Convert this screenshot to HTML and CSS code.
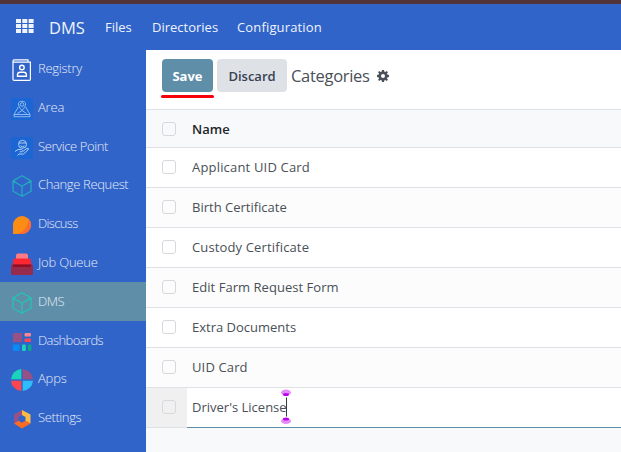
FILE: index.html
```html
<!DOCTYPE html>
<html lang="en">
<head>
<meta charset="utf-8">
<title>Categories</title>
<link rel="stylesheet" href="styles.css">
</head>
<body>
<header class="navbar">
  <svg class="grid-icon" width="18" height="14" viewBox="0 0 18 14" fill="#eef3fc"><path d="M0 0h5v4H0zM6.3 0h5v4h-5zM12.6 0h5v4h-5zM0 5h5v4H0zM6.3 5h5v4h-5zM12.6 5h5v4h-5zM0 10h5v4H0zM6.3 10h5v4h-5zM12.6 10h5v4h-5z"/></svg>
  <span class="brand">DMS</span>
  <nav class="menu"><a class="m1">Files</a><a class="m2">Directories</a><a class="m3">Configuration</a></nav>
</header>
<div class="body">
  <aside class="sidebar">
    <a class="app"><svg width="22" height="22" viewBox="0 0 22 22" fill="none" stroke="#fff" stroke-width="1.2"><path d="M17 3V.8H3.200Q2 .8 2 2T3.200 3.200H19.400V20.200Q19.400 21.300 18.300 21.300H3.200Q2 21.300 2 20.200V2"/><circle cx="10.900" cy="8.500" r="2.300" stroke-width="1.400"/><path stroke-width="1.400" d="M6.500 17.200V15.500Q6.700 13.200 9 13.200H12.800Q15.200 13.200 15.400 15.500V17.200Z"/></svg><span class="s1">Registry</span></a>
    <a class="app"><svg width="22" height="22" viewBox="0 0 22 22" fill="none" stroke="#9cc2f2" stroke-width=".9"><path fill="#1b66d2" stroke="none" d="M0 0h22v22H0z"/><path d="M11 12.500C5.500 6.500 7 3.300 11 3.300S16.500 6.500 11 12.500ZM7.300 9 3 16.500H19L14.700 9M3 16.500V18.700H19V16.500M6.500 15.500 11 12.500 15.500 15.500"/><circle cx="11" cy="6.500" r="1.800"/></svg><span class="s2">Area</span></a>
    <a class="app"><svg width="22" height="22" viewBox="0 0 22 22" fill="none" stroke="#c0d8f7" stroke-width=".9"><path fill="#1b66d2" stroke="none" d="M0 0h22v22H0z"/><circle cx="11.500" cy="7.300" r="4"/><path d="M7.800 6H15.200M9.500 8.800Q11.500 10.800 13.500 8.800M4 14.500 7 12.500H10.500Q12.500 13.500 10.500 14.800H8.500M11.500 14.800 16 11.300Q18.300 11 17 13L12.500 17H8L6.500 18.500"/></svg><span class="s3">Service Point</span></a>
    <a class="app"><svg width="22" height="22" viewBox="0 0 22 22" fill="none" stroke="#24aabf" stroke-width="1.300" stroke-linejoin="round"><path d="M11 .8 20 5.900V16.200L11 21.300 2 16.200V5.900ZM2 5.900 11 11.300 20 5.900M11 11.300V21.300"/></svg><span class="s4">Change Request</span></a>
    <a class="app"><svg width="22" height="22" viewBox="0 0 22 22"><path fill="#fc8d14" d="M2 20V11A9 9 0 1 1 11 20Z"/><path fill="#fc6b30" d="M18 5.300A9 9 0 0 1 11 20H6.500Q16 17.500 18 5.300Z"/></svg><span class="s5">Discuss</span></a>
    <a class="app"><svg width="22" height="22" viewBox="0 0 22 22"><rect x="5" y=".5" width="12" height="7" rx="2" fill="#fb7c85"/><rect x="2" y="5.500" width="18" height="9" rx="2" fill="#fb2632"/><rect y="11.500" width="22" height="10.500" rx="1.500" fill="#962b4c"/><path fill="#970c20" d="M2 11.500H20V13Q20 14 18.500 14H3.500Q2 14 2 13Z"/></svg><span class="s6">Job Queue</span></a>
    <a class="app active"><svg width="22" height="22" viewBox="0 0 22 22" fill="none" stroke="#27c2b4" stroke-width="1.300" stroke-linejoin="round"><path d="M11 .8 20 5.900V16.200L11 21.300 2 16.200V5.900ZM2 5.900 11 11.300 20 5.900M11 11.300V21.300"/></svg><span class="s7">DMS</span></a>
    <a class="app"><svg width="22" height="22" viewBox="0 0 22 22"><rect x="2" y="2" width="9" height="9" rx=".8" fill="#985184"/><rect x="13.500" y="2" width="6.500" height="3.500" rx="1" fill="#fc868b"/><rect x="13.500" y="7.500" width="6.500" height="3.500" rx="1" fill="#fb4650"/><rect x="2" y="13.500" width="6.500" height="6.500" rx="1" fill="#088bf5"/><rect x="11" y="13.500" width="3.800" height="6.500" rx="1" fill="#1ad3bb"/><rect x="17" y="13.500" width="3.300" height="6.500" rx="1" fill="#05ae88"/></svg><span class="s8">Dashboards</span></a>
    <a class="app"><svg width="22" height="22" viewBox="0 0 22 22"><path fill="#1ad3bb" d="M10.300 0V10.300H0A11 11 0 0 1 10.300 0Z"/><path fill="#985184" d="M11.700 0V10.300H22A11 11 0 0 0 11.700 0Z"/><path fill="#fb4650" d="M10.300 22V11.700H0A11 11 0 0 0 10.300 22Z"/><path fill="#2ebcfa" d="M11.700 22V11.700H22A11 11 0 0 1 11.700 22Z"/></svg><span class="s9">Apps</span></a>
    <a class="app"><svg width="22" height="22" viewBox="0 0 22 22"><path fill="#985184" d="M11 2 3 6.500V15.500L7.500 13V9L11 7Z"/><path fill="#fbb945" d="M11 2 19.500 6.500V15.500L14.500 13V9L11 7Z"/><path fill="#fc6b23" d="M3 15.500 7.500 12.800 11 14.800 14.500 12.800 19.500 15.500 11 20.500Z"/></svg><span class="s10">Settings</span></a>
  </aside>
  <main class="content">
    <div class="control">
      <div class="save-wrap"><button class="btn save">Save</button><i class="underline"></i></div>
      <button class="btn discard">Discard</button>
      <h1>Categories</h1>
      <svg class="gear" width="12" height="12" viewBox="0 0 12 12" fill="#495057"><path fill-rule="evenodd" d="M5 0H7L7.400 1.700 8.300 2.100 9.800 1.100 10.900 2.200 9.900 3.700 10.300 4.600 12 5V7L10.300 7.400 9.900 8.300 10.900 9.800 9.800 10.900 8.300 9.900 7.400 10.300 7 12H5L4.600 10.300 3.700 9.900 2.200 10.900 1.100 9.800 2.100 8.300 1.700 7.400 0 7V5L1.700 4.600 2.100 3.700 1.100 2.200 2.200 1.100 3.700 2.100 4.600 1.700ZM6 4A2 2 0 1 0 6 8A2 2 0 1 0 6 4Z"/></svg>
    </div>
    <div class="row head"><span class="check"><i></i></span><span class="cell"><span class="t0">Name</span></span></div>
    <div class="row"><span class="check"><i></i></span><span class="cell"><span class="t1">Applicant UID Card</span></span></div>
    <div class="row alt"><span class="check"><i></i></span><span class="cell"><span class="t2">Birth Certificate</span></span></div>
    <div class="row"><span class="check"><i></i></span><span class="cell"><span class="t3">Custody Certificate</span></span></div>
    <div class="row alt"><span class="check"><i></i></span><span class="cell"><span class="t4">Edit Farm Request Form</span></span></div>
    <div class="row"><span class="check"><i></i></span><span class="cell"><span class="t5">Extra Documents</span></span></div>
    <div class="row alt"><span class="check"><i></i></span><span class="cell"><span class="t6">UID Card</span></span></div>
    <div class="row editing"><span class="check"><i></i></span><span class="cell"><span class="t7">Driver's License</span>
      <svg class="caret" width="10" height="36" viewBox="0 0 10 36"><ellipse cx="5" cy="3.500" rx="5" ry="3" fill="#e38bf8"/><ellipse cx="5" cy="5.500" rx="3" ry="1.500" fill="#be00f0"/><path fill="#343a40" d="M5 8.500h1v19H5z"/><ellipse cx="5" cy="32" rx="5" ry="3" fill="#e38bf8"/><ellipse cx="5" cy="30" rx="3" ry="1.500" fill="#be00f0"/></svg></span></div>
  </main>
</div>
</body>
</html>
```
FILE: styles.css
```css
* { box-sizing: border-box; }
body { margin: 0; width: 621px; height: 452px; overflow: hidden; background: #3164c9; font-family: "Open Sans", "Noto Sans", sans-serif; font-size: 13px; color: #495057; }
.navbar { height: 50px; border-top: 4px solid #523439; display: flex; align-items: center; padding-left: 16px; color: #eef3fc; }
.grid-icon { margin-bottom: 2px; }
.brand { font-size: 16.500px; width: 56px; margin-left: 15px; white-space: nowrap; }
.menu { display: flex; }
.menu a { white-space: nowrap; }
.m1 { width: 47px; }
.m2 { width: 85px; }
.m3 { letter-spacing: .15px; }
.body { display: flex; height: 402px; }
.sidebar { width: 146px; flex: none; margin-top: -.4px; }
.app { display: flex; align-items: center; height: 38.8px; padding-left: 11px; gap: 5px; color: #e4ebf8; font-weight: 300; font-size: 13px; white-space: nowrap; }
.app svg { margin-top: 2px; }
.app span { padding-bottom: 2px; }
.app.active { background: #5f8ea9; }
.s1 { letter-spacing: -.25px; }
.s2, .s9 { letter-spacing: -.2px; }
.s3 { letter-spacing: -.4px; }
.s4 { letter-spacing: -.36px; }
.s5 { letter-spacing: -.65px; }
.s6 { letter-spacing: -.2px; }
.s7 { letter-spacing: -.5px; }
.s8 { letter-spacing: -.58px; }
.s10 { letter-spacing: -.4px; }
.content { flex: 1; background: #f8f9fb; }
.control { height: 60px; background: #fff; border-bottom: 1px solid #dee2e6; display: flex; align-items: flex-start; padding: 9px 0 0 16px; }
.save-wrap { position: relative; margin-right: 4px; }
.btn { border: 0; border-radius: 4px; height: 33px; padding: 0; font: 600 14px "Open Sans", sans-serif; display: block; }
.save { width: 51px; background: #5f8ea9; color: #fff; font-weight: 700; font-size: 13px; }
.discard { width: 70px; background: #dee2e6; color: #374151; font-size: 13px; }
.underline { position: absolute; left: -1px; top: 36px; width: 53px; height: 3px; border-radius: 2px; background: #f8000a; }
h1 { margin: 0 0 0 4px; width: 86px; font-size: 16.500px; font-weight: 400; letter-spacing: -.3px; line-height: 34px; white-space: nowrap; }
.gear { margin-top: 11px; }
.row { height: 40px; display: flex; background: #fff; border-bottom: 1px solid #dee2e6; padding-bottom: 0; }
.row.alt { background: #fcfcfc; }
.row.head { height: 38px; background: #f8f9fb; color: #212529; font-weight: 600; }
.check { width: 41px; padding-left: 16px; display: flex; align-items: center; }
.check i { width: 14px; height: 14px; border: 1px solid #d6d8db; border-radius: 3px; background: transparent; }
.cell { flex: 1; display: flex; align-items: center; padding-left: 5px; position: relative; white-space: nowrap; }
.row:not(.head) .check, .row:not(.head) .cell { padding-bottom: 2px; }
.t1 { letter-spacing: .18px; }
.t3 { letter-spacing: .14px; }
.t4 { letter-spacing: .04px; }
.t6 { letter-spacing: .14px; }
.editing .check { background: #f0f0f0; }
.editing .cell { background: #fff; margin-bottom: -1px; border-bottom: 1px solid #5f8ea9; }
.caret { position: absolute; left: 94px; top: 1px; }
```
